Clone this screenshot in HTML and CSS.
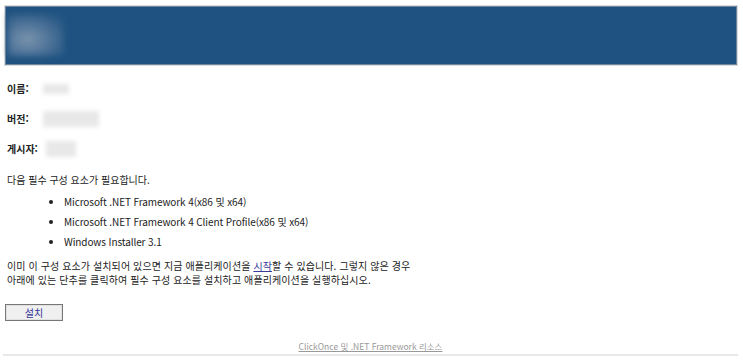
FILE: index.html
```html
<!DOCTYPE html>
<html lang="ko">
<head>
<meta charset="utf-8">
<link rel="stylesheet" href="styles.css">
</head>
<body>
<div class="header">
  <div class="banner"><div class="logo"></div></div>
</div>
<div class="content">
  <div class="field"><span class="label">이름:</span><span class="blur w1"></span></div>
  <div class="field"><span class="label">버전:</span><span class="blur w2"></span></div>
  <div class="field"><span class="label">게시자:</span><span class="blur w3"></span></div>
  <p class="intro">다음 필수 구성 요소가 필요합니다.</p>
  <ul class="reqs">
    <li>Microsoft .NET Framework 4(x86 및 x64)</li>
    <li>Microsoft .NET Framework 4 Client Profile(x86 및 x64)</li>
    <li>Windows Installer 3.1</li>
  </ul>
  <p class="para">이미 이 구성 요소가 설치되어 있으면 지금 애플리케이션을 <a href="#" class="start">시작</a>할 수 있습니다. 그렇지 않은 경우<br>아래에 있는 단추를 클릭하여 필수 구성 요소를 설치하고 애플리케이션을 실행하십시오.</p>
  <button class="install">설치</button>
</div>
<div class="footer"><a href="#">ClickOnce 및 .NET Framework 리소스</a></div>
</body>
</html>
```
FILE: styles.css
```css
html, body { margin: 0; padding: 0; background: #fff; }
body {
  font-family: "Noto Sans CJK KR", sans-serif;
  font-size: 10px;
  color: #222;
  width: 743px;
}
.header {
  margin: 5px 5px 0 4px;
  border: 1px solid #dcdcdc;
}
.banner {
  background: #1f5280;
  border: 1px solid #6f86a0;
  padding: 7px 0 0 2px;
  box-sizing: border-box;
  height: 59px;
}
.logo {
  width: 56px;
  height: 42px;
  background: radial-gradient(ellipse at 35% 60%, #7a95ae 0%, #52769a 40%, #2a5a86 80%, #1f5280 100%);
  filter: blur(3px);
}
.content { padding: 0 0 0 7px; }
.field {
  display: flex;
  align-items: center;
  height: 30px;
  line-height: 14px;
}
.field:first-child { margin-top: 8px; }
.label { font-weight: bold; }
.blur {
  display: inline-block;
  background: #e8e8e8;
  filter: blur(2px);
}
.w1 { width: 26px; height: 10px; margin-left: 14px; }
.w2 { width: 56px; height: 16px; margin-left: 14px; }
.w3 { width: 30px; height: 16px; margin-left: 8px; }
.intro { margin: 9px 0 0 0; line-height: 14px; }
.reqs {
  margin: 8px 0 0 0;
  padding-left: 57px;
  line-height: 14px;
}
.reqs li { margin-bottom: 6px; letter-spacing: -0.1px; }
.para { margin: 10px 0 0 0; line-height: 14px; letter-spacing: 0.1px; }
.start { color: #3a3a9a; }
.install {
  display: block;
  margin: 17px 0 0 -2px;
  width: 58px;
  height: 17px;
  padding: 0;
  font-family: "Noto Sans CJK KR", sans-serif;
  font-size: 10px;
  line-height: 14px;
  color: #333399;
  background: #f0f0f0;
  border: 1px solid #777;
  box-shadow: inset 0 0 0 1px #e0e0e0;
}
.footer {
  margin: 19px 5px 0 3px;
  border-bottom: 2px solid #e8e8e8;
  text-align: center;
  padding-bottom: 2px;
  line-height: 12px;
}
.footer a {
  color: #999;
  font-size: 8.5px;
}
```
